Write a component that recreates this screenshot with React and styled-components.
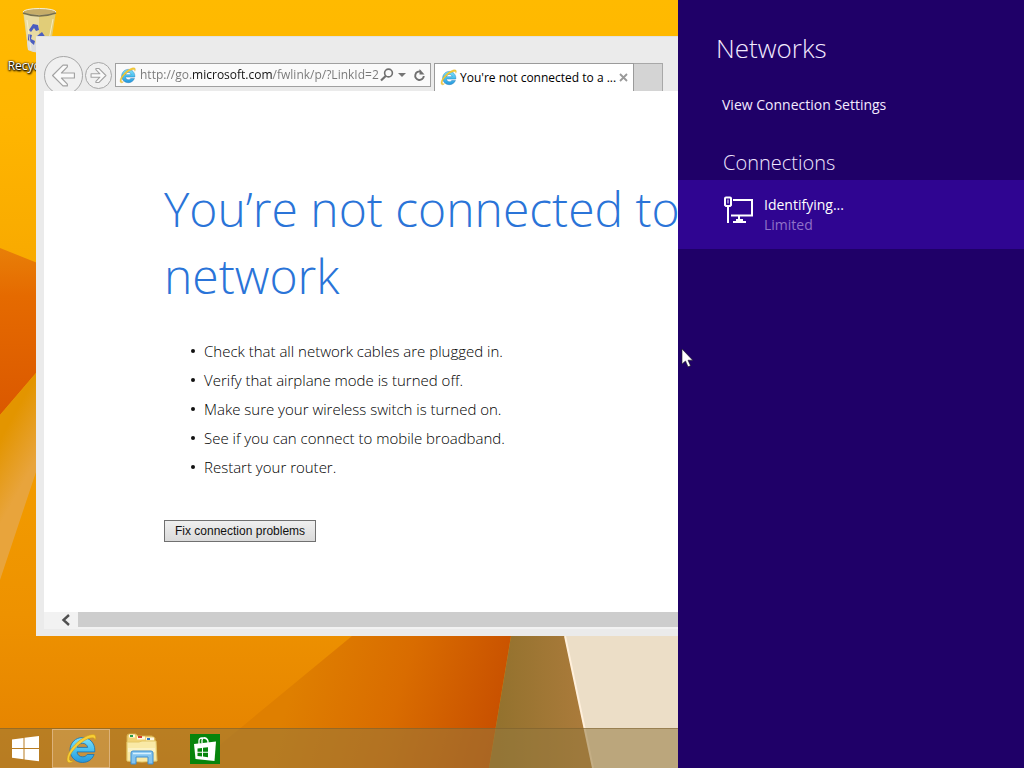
import React from "react";
import styled, { createGlobalStyle } from "styled-components";

const GlobalStyle = createGlobalStyle`
  * { box-sizing: border-box; }
  body {
    margin: 0;
    font-family: "Open Sans", "Noto Sans", sans-serif;
    font-size: 12px;
  }
  button { font: inherit; cursor: default; }
`;

const Desktop = styled.div`
  position: relative;
  display: flex;
  flex-direction: column;
  min-height: 100vh;
  overflow: hidden;
`;

const Wallpaper = styled.svg`
  position: absolute;
  inset: 0;
  width: 100%;
  height: 100%;
`;

const Workspace = styled.main`
  position: relative;
  flex: 1;
  display: flex;
  padding: 36px 24px 92px 36px;
`;

const Shortcut = styled.a`
  position: absolute;
  top: 6px;
  left: 0;
  width: 78px;
  display: flex;
  flex-direction: column;
  align-items: center;
  gap: 2px;
  color: #fff;
  line-height: 16px;
  text-decoration: none;
  text-shadow: 0 1px 2px #000, 1px 1px 2px #000, 0 0 2px #000;
`;

const BrowserWindow = styled.section`
  position: relative;
  flex: 1;
  min-width: 0;
  display: flex;
  flex-direction: column;
  padding: 0 8px 7px;
  background: #ebebeb;
  border: solid #e2e2e0;
  border-width: 1px 0 0;
`;

const Toolbar = styled.header`
  display: flex;
  height: 54px;
  padding-top: 19px;
  overflow: hidden;
`;

const NavButton = styled.button`
  flex: none;
  width: ${(p) => p.$size}px;
  height: ${(p) => p.$size}px;
  margin-top: ${(p) => (p.$size > 30 ? 0 : 6)}px;
  margin-right: 2px;
  padding: 0;
  display: grid;
  place-items: center;
  border: 1px solid #a6a6a6;
  border-radius: 50%;
  background: #f0f0f0;
`;

const AddressBar = styled.form`
  flex: none;
  display: flex;
  align-items: center;
  width: 316px;
  height: 24px;
  margin: 7px 3px 0 1px;
  padding: 0 2px 0 3px;
  background: #fafafa;
  border: 1px solid #a0a0a0;
`;

const AddressInput = styled.input`
  flex: 1;
  min-width: 0;
  margin: 0 0 0 4px;
  padding: 0;
  border: 0;
  outline: 0;
  font: inherit;
  line-height: 20px;
  color: transparent;
  background: linear-gradient(90deg, #777 52px, #111 52px 133px, #777 133px);
  background-clip: text;
  -webkit-background-clip: text;
`;

const GlyphButton = styled.button`
  flex: none;
  width: ${(p) => p.$width}px;
  height: 20px;
  padding: 0;
  border: 0;
  background: none;
  display: grid;
  place-items: center;
`;

const Tab = styled.div`
  flex: none;
  display: flex;
  align-items: center;
  width: 200px;
  height: 28px;
  margin-top: 7px;
  padding: 0 2px 0 5px;
  gap: 3px;
  background: #fff;
  border: solid #9b9b9b;
  border-width: 1px 1px 0;
`;

const TabTitle = styled.span`
  flex: 1;
  min-width: 0;
  white-space: nowrap;
  color: #000;
`;

const NewTab = styled.button`
  flex: none;
  width: 29px;
  height: 28px;
  margin-top: 7px;
  padding: 0;
  background: #d4d4d4;
  border: solid #a8a8a8;
  border-width: 1px 1px 0 0;
`;

const Page = styled.article`
  flex: 1;
  padding: 84px 120px 68px;
  background: #fff;
`;

const PageTitle = styled.h1`
  margin: 0 0 28px;
  max-width: 600px;
  font-size: 48px;
  line-height: 67px;
  font-weight: 300;
  color: #2a74d8;
`;

const Tips = styled.ul`
  margin: 0 0 38px;
  padding: 0 0 0 40px;
  list-style: none;
  font-size: 15px;
  line-height: 29px;
  font-weight: 300;
  color: #000;

  li { position: relative; }
  li::before {
    content: "";
    position: absolute;
    left: -13px;
    top: 12px;
    width: 4px;
    height: 4px;
    border-radius: 50%;
    background: #111;
  }
`;

const FixButton = styled.button`
  height: 22px;
  padding: 0 10px;
  font-family: "Liberation Sans", Arial, sans-serif;
  font-size: 12px;
  color: #111;
  background: linear-gradient(#efefef, #dadada);
  border: 1px solid #707070;
`;

const ScrollBar = styled.div`
  display: flex;
  height: 17px;
  background: #f2f2f2;
`;

const ScrollArrow = styled.button`
  width: 34px;
  height: 15px;
  padding: 0 0 0 8px;
  border: 0;
  background: none;
  display: grid;
  place-items: center;
`;

const ScrollThumb = styled.div`
  flex: 1;
  height: 15px;
  background: #cdcdcd;
`;

const Taskbar = styled.nav`
  position: relative;
  display: flex;
  gap: 1px;
  height: 40px;
  background: rgba(147, 120, 62, 0.55);
  border-top: 1px solid rgba(120, 90, 40, 0.5);
`;

const TaskButton = styled.button`
  width: ${(p) => p.$width || 62}px;
  padding: 0;
  display: grid;
  place-items: center;
  border: 1px solid ${(p) => (p.$active ? "#dcb27a" : "transparent")};
  background: ${(p) => (p.$active ? "rgba(255, 225, 170, 0.22)" : "none")};
`;

const NetworksPane = styled.aside`
  position: absolute;
  top: 0;
  right: 0;
  bottom: 0;
  width: 346px;
  padding-top: 28px;
  background: #1f0068;
  color: #fff;
`;

const PaneTitle = styled.h2`
  margin: 0 0 27px;
  padding-left: 38px;
  font-size: 26px;
  line-height: 40px;
  font-weight: 300;
  color: #f3eaff;
`;

const PaneLink = styled.a`
  display: block;
  margin-left: 44px;
  font-size: 14px;
  line-height: 20px;
  color: #f3eaff;
  text-decoration: none;
`;

const PaneSubtitle = styled.h3`
  margin: 33px 0 2px;
  padding-left: 45px;
  font-size: 20px;
  line-height: 30px;
  font-weight: 300;
  color: #efe6ff;
`;

const Connection = styled.button`
  display: flex;
  gap: 10px;
  width: 100%;
  height: 69px;
  padding: 15px 0 0 45px;
  align-items: flex-start;
  border: 0;
  background: #2f0591;
  color: #fff;
  text-align: left;
  font-size: 14px;
  line-height: 20px;
`;

const ConnectionText = styled.span`
  display: flex;
  flex-direction: column;
`;

const Status = styled.span`
  color: #8f72c8;
`;

const Pointer = styled.svg`
  position: absolute;
  left: 681px;
  top: 348px;
`;

function IeLogo({ size, id }) {
  return (
    <svg width={size} height={size} viewBox="0 0 32 32" aria-hidden="true">
      <defs>
        <linearGradient id={id} x1="0" y1="0" x2="0" y2="1">
          <stop offset="0" stopColor="#7fe0fa" />
          <stop offset="0.55" stopColor="#45bdee" />
          <stop offset="1" stopColor="#2796da" />
        </linearGradient>
      </defs>
      <path
        d="M17.500 4.500C10.500 4.500 5 10 5 17s5.500 12.500 12.500 12.500c5.300 0 9.800-3 11.600-8h-6.900c-.9 1.400-2.500 2.300-4.500 2.300-3.200 0-5.500-2.100-5.700-4.900h17.700c.1-.6.100-1.200.1-1.900 0-7-5.300-12.500-12.300-12.500zM12.200 14.400c.6-2.500 2.700-4.100 5.300-4.100s4.700 1.600 5.200 4.100z"
        fill={`url(#${id})`}
        stroke="#1672b4"
        strokeWidth="0.800"
      />
      <path
        d="M8.800 27.500C5.500 31 1.800 30.300 2 26 2.300 19 10.500 9.500 18.500 4.800 24 1.500 29.500.5 30.500 3c.6 1.500.2 3.200-.7 5 .2-2.100-.4-3.200-2.300-3.200-3 0-7 1.700-11.300 5C9.500 15 4.500 21.500 4.400 25.400c-.1 2.600 1.800 3 4.400 2.100z"
        fill="#f8cf35"
        stroke="#c99312"
        strokeWidth="0.500"
      />
    </svg>
  );
}

function ArrowOutline({ size, flip }) {
  return (
    <svg width={size} height={size} viewBox="0 0 24 24" aria-hidden="true">
      <path
        d="M1.500 12 11.500 2h4.200v1.800L10 9.600h12.500v4.800H10l5.700 5.800V22h-4.200z"
        fill="#fafafa"
        stroke="#a2a2a2"
        strokeWidth={flip ? 1.500 : 1.100}
        strokeLinejoin="round"
        transform={flip ? "rotate(180 12 12)" : undefined}
      />
    </svg>
  );
}

function WallpaperArt() {
  return (
    <Wallpaper viewBox="0 0 1024 768" preserveAspectRatio="none" aria-hidden="true">
      <defs>
        <linearGradient id="sky" x1="0" y1="0" x2="0" y2="1">
          <stop offset="0" stopColor="#ffba00" />
          <stop offset="0.150" stopColor="#ffb600" />
          <stop offset="0.350" stopColor="#f8a900" />
          <stop offset="0.800" stopColor="#ee9200" />
          <stop offset="1" stopColor="#e48100" />
        </linearGradient>
        <linearGradient id="ridge" x1="0" y1="248" x2="0" y2="410" gradientUnits="userSpaceOnUse">
          <stop offset="0" stopColor="#e87f08" />
          <stop offset="0.300" stopColor="#e56a00" />
          <stop offset="1" stopColor="#db5900" />
        </linearGradient>
        <linearGradient id="beam" x1="0" y1="440" x2="36" y2="460" gradientUnits="userSpaceOnUse">
          <stop offset="0" stopColor="#e39500" />
          <stop offset="1" stopColor="#e8a43c" />
        </linearGradient>
        <linearGradient id="flame" x1="300" y1="660" x2="500" y2="720" gradientUnits="userSpaceOnUse">
          <stop offset="0" stopColor="#df7f00" />
          <stop offset="0.500" stopColor="#d96c00" />
          <stop offset="1" stopColor="#c85000" />
        </linearGradient>
        <linearGradient id="earth" x1="500" y1="0" x2="585" y2="0" gradientUnits="userSpaceOnUse">
          <stop offset="0" stopColor="#94722e" />
          <stop offset="1" stopColor="#ab7b3b" />
        </linearGradient>
      </defs>
      <rect width="1024" height="768" fill="url(#sky)" />
      <path d="M0 248 60 272V345L0 415z" fill="url(#ridge)" />
      <path d="M0 415 60 345V400L0 580z" fill="url(#beam)" />
      <path d="M352 636 192 768H489L511 636z" fill="url(#flame)" />
      <path d="M511 636H566L594 768H489z" fill="url(#earth)" />
      <path d="M565 636H1024V768H593z" fill="#ecdec7" />
      <path d="M565 636 593 768" stroke="#fff0dc" strokeWidth="2" />
    </Wallpaper>
  );
}

function RecycleBin() {
  return (
    <svg width="40" height="50" viewBox="0 0 40 50" aria-hidden="true">
      <path d="M4 5 9 44q11 5 22 0L37 5z" fill="#e1cd78" />
      <path d="M5 9 9 43q5 3 11 3V9z" fill="#eadfae" opacity=".8" />
      <path d="M8 35 9 44q11 5 22 0l1-9q-12 5-24 0z" fill="#dcdcdc" />
      <ellipse cx="20.500" cy="6" rx="16.500" ry="3.500" fill="#c6ad68" stroke="#f4f0dc" />
      <path d="M4 7q16 6 33 0" fill="none" stroke="#77704e" strokeWidth="1.500" />
      <path d="M10 24 14 18l5 1 1 5-3 1-2-3-3 4zM9 28l4 1-1 4 4 2-1 4-6-5zM18 30l5-4 4 6-5 6-5-2 1-3h3z" fill="#4a5dc0" />
      <path d="M8 14 12 44M34 13 28 44" stroke="#fff8d8" strokeWidth="1" opacity=".7" />
    </svg>
  );
}

function WindowsLogo() {
  return (
    <svg width="28" height="26" viewBox="0 0 28 26" aria-hidden="true">
      <path d="M0 3.500 11.500 2V12H0zM12.500 1.800 27 0V12H12.500zM0 13H11.500V23.300L0 21.800zM12.500 13H27V25.300L12.500 23.400z" fill="#fff" />
    </svg>
  );
}

function FolderIcon() {
  return (
    <svg width="34" height="32" viewBox="0 0 34 32" aria-hidden="true">
      <path d="M2 3q0-2 2-2h7l2 2h14l3 2v22H2z" fill="#f1d273" stroke="#d3ae4d" />
      <path d="M4 3h6M12 5h8M21 6h8" stroke="#fff8e0" strokeWidth="3" />
      <path d="M5 3h3" stroke="#279c49" strokeWidth="2" />
      <path d="M13 4h4" stroke="#d3402f" strokeWidth="2" />
      <path d="M22 6h3" stroke="#3577c0" strokeWidth="2" />
      <path d="M2 9h12l3-1h14l1 20q-15 2-30 0z" fill="#f9e9a6" stroke="#e4c869" />
      <path d="M3 15h27v4H3z" fill="#fdf5ce" opacity=".7" />
      <path d="M6 31V20q0-2 2-2h18q2 0 2 2v11h-5v-7H11v7z" fill="#83c4ef" stroke="#3e8ed0" />
      <path d="M8 20.500h18" stroke="#d6f0ff" strokeWidth="1.500" />
    </svg>
  );
}

function StoreIcon() {
  return (
    <svg width="30" height="30" viewBox="0 0 30 30" aria-hidden="true">
      <path d="M0 0h30v30H0z" fill="#07840c" />
      <path d="M9 10V7q0-3 3-3h2q3 0 4 3v2M12 9V6q1-3 4-2 2 1 2 4" fill="none" stroke="#fff" strokeWidth="1.300" />
      <path d="M4 10 26 7.500 24.500 27 5.500 25z" fill="#fff" />
      <path d="M7.500 14.500 12 14v3.700H7.500zM13 13.800l5-.6v4.500h-5zM7.500 18.700H12v3.700l-4.500-.5zM13 18.700h5v4.500l-5-.6z" fill="#07840c" />
    </svg>
  );
}

const tips = [
  "Check that all network cables are plugged in.",
  "Verify that airplane mode is turned off.",
  "Make sure your wireless switch is turned on.",
  "See if you can connect to mobile broadband.",
  "Restart your router.",
];

export default function App() {
  return (
    <>
      <GlobalStyle />
      <Desktop>
        <WallpaperArt />
        <Workspace>
          <Shortcut href="#recycle-bin">
            <RecycleBin />
            <span>Recycle Bin</span>
          </Shortcut>
          <BrowserWindow aria-label="Internet Explorer">
            <Toolbar>
              <NavButton $size={39} aria-label="Back">
                <ArrowOutline size={25} />
              </NavButton>
              <NavButton $size={27} aria-label="Forward">
                <ArrowOutline size={17} flip />
              </NavButton>
              <AddressBar onSubmit={(e) => e.preventDefault()}>
                <IeLogo size={17} id="ieAddress" />
                <AddressInput
                  aria-label="Address"
                  defaultValue="http://go.microsoft.com/fwlink/p/?LinkId=2"
                />
                <GlyphButton type="submit" $width={14} aria-label="Search">
                  <svg width="14" height="14" viewBox="0 0 14 14">
                    <circle cx="8.500" cy="5" r="3.900" fill="none" stroke="#6f6f6f" strokeWidth="1.600" />
                    <path d="M5.700 8 1 12.500" stroke="#6f6f6f" strokeWidth="2.200" />
                  </svg>
                </GlyphButton>
                <GlyphButton type="button" $width={16} aria-label="Show address list">
                  <svg width="8" height="5" viewBox="0 0 8 5">
                    <path d="M0 0h8L4 4z" fill="#757575" />
                  </svg>
                </GlyphButton>
                <GlyphButton type="button" $width={18} aria-label="Refresh">
                  <svg width="13" height="13" viewBox="0 0 13 13">
                    <path d="M8 2.700A4.300 4.300 0 1 0 10.800 7" fill="none" stroke="#707070" strokeWidth="1.900" />
                    <path d="M6.500 0v5.500H11.500z" fill="#707070" />
                  </svg>
                </GlyphButton>
              </AddressBar>
              <Tab>
                <IeLogo size={17} id="ieTab" />
                <TabTitle>You're not connected to a ...</TabTitle>
                <GlyphButton $width={16} aria-label="Close tab">
                  <svg width="9" height="9" viewBox="0 0 9 9">
                    <path d="M1 1l7 7M8 1 1 8" stroke="#999" strokeWidth="1.800" />
                  </svg>
                </GlyphButton>
              </Tab>
              <NewTab aria-label="New tab" />
            </Toolbar>
            <Page>
              <PageTitle>You’re not connected to a network</PageTitle>
              <Tips>
                {tips.map((tip) => (
                  <li key={tip}>{tip}</li>
                ))}
              </Tips>
              <FixButton>Fix connection problems</FixButton>
            </Page>
            <ScrollBar>
              <ScrollArrow aria-label="Scroll left">
                <svg width="9" height="12" viewBox="0 0 9 12">
                  <path d="M8 1 2.500 6 8 11" fill="none" stroke="#505050" strokeWidth="2.400" />
                </svg>
              </ScrollArrow>
              <ScrollThumb />
            </ScrollBar>
          </BrowserWindow>
        </Workspace>
        <Taskbar>
          <TaskButton $width={51} aria-label="Start">
            <WindowsLogo />
          </TaskButton>
          <TaskButton $width={58} $active aria-label="Internet Explorer">
            <IeLogo size={32} id="ieTask" />
          </TaskButton>
          <TaskButton aria-label="File Explorer">
            <FolderIcon />
          </TaskButton>
          <TaskButton aria-label="Store">
            <StoreIcon />
          </TaskButton>
        </Taskbar>
        <NetworksPane>
          <PaneTitle>Networks</PaneTitle>
          <PaneLink href="#settings">View Connection Settings</PaneLink>
          <PaneSubtitle>Connections</PaneSubtitle>
          <Connection>
            <svg width="31" height="30" viewBox="0 0 31 30" aria-hidden="true">
              <path d="M10 5H29V20.500H8M16 21v5M10 27H23" fill="none" stroke="#fff" strokeWidth="2" />
              <path d="M13 24h7v2h-7z" fill="#fff" />
              <path d="M2 3.500q0-1 1-1h4q1 0 1 1V10l-1 1H3l-1-1zM5 11v17" fill="none" stroke="#fff" strokeWidth="2" />
              <path d="M5 4.500v4" stroke="#fff" strokeWidth="1" />
            </svg>
            <ConnectionText>
              <span>Identifying...</span>
              <Status>Limited</Status>
            </ConnectionText>
          </Connection>
        </NetworksPane>
        <Pointer width="13" height="20" viewBox="0 0 13 20" aria-hidden="true">
          <path d="M1 1v15l3.500-3 2.500 5.800 2.500-1.100L7 12.200h4.700z" fill="#fff" stroke="#222" strokeWidth="0.600" />
        </Pointer>
      </Desktop>
    </>
  );
}
